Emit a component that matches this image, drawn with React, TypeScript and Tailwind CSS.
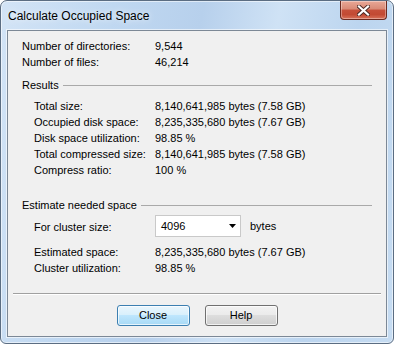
import React from "react";

const Row = ({ label, value, indent = false }: { label: string; value: string; indent?: boolean }) => (
  <div className="flex h-4 items-center leading-4">
    <span className={indent ? "w-[121px] pl-3 box-content" : "w-[133px]"}>{label}</span>
    <span>{value}</span>
  </div>
);

const Header = ({ text }: { text: string }) => (
  <div className="flex h-4 items-center leading-4">
    <span>{text}</span>
    <div className="ml-[4px] mr-[14px] h-px flex-1 bg-[#a9a9a9] mt-[1px]" />
  </div>
);

export default function App() {
  return (
    <div
      className="relative flex h-[344px] w-[394px] flex-col overflow-hidden rounded-t-[7px] rounded-b-[6px] border border-[#5b6d82] bg-[linear-gradient(100deg,#d3e4f6_0%,#c0d8f1_25%,#b7d0ec_45%,#cfe2f5_62%,#bcd5ef_80%,#c6dcf2_100%)] shadow-[inset_0_0_0_1px_rgba(255,255,255,0.55)]"
      style={{ fontFamily: '"Liberation Sans", Arial, sans-serif' }}
    >
      {/* title bar */}
      <div className="flex h-[29px] shrink-0 items-start justify-between">
        <div className="flex h-[29px] items-center pl-[7px] text-[12px] text-black [text-shadow:0_0_6px_rgba(255,255,255,0.9)]">
          Calculate Occupied Space
        </div>
        <div className="mr-[6px] flex h-[19px] w-[47px] items-center justify-center rounded-b-[4px] border border-t-0 border-[#6b2a20] bg-[linear-gradient(180deg,#e9a897_0%,#d98a76_45%,#c6503a_50%,#c24a33_75%,#d8725a_100%)] shadow-[inset_0_0_0_1px_rgba(255,255,255,0.35)]">
          <svg width="13" height="11" viewBox="0 0 13 11">
            <path d="M2 1.5 L11 9.5 M11 1.5 L2 9.5" stroke="#4a2a25" strokeWidth="4" strokeLinecap="square" />
            <path d="M2 1.5 L11 9.5 M11 1.5 L2 9.5" stroke="#ffffff" strokeWidth="2.2" strokeLinecap="square" />
          </svg>
        </div>
      </div>

      {/* client area */}
      <div className="mx-[6px] flex h-[307px] flex-col border border-[#7c8896] bg-[#f0f0f0] text-[11px] text-black shadow-[0_0_0_1px_rgba(255,255,255,0.6)]">
        <div className="flex flex-col pl-[14px] pt-[7px]">
          <Row label="Number of directories:" value="9,544" />
          <Row label="Number of files:" value="46,214" />
          <div className="mt-[7px]">
            <Header text="Results" />
          </div>
          <div className="mt-[5px] flex flex-col">
            <Row indent label="Total size:" value="8,140,641,985 bytes (7.58 GB)" />
            <Row indent label="Occupied disk space:" value="8,235,335,680 bytes (7.67 GB)" />
            <Row indent label="Disk space utilization:" value="98.85 %" />
            <Row indent label="Total compressed size:" value="8,140,641,985 bytes (7.58 GB)" />
            <Row indent label="Compress ratio:" value="100 %" />
          </div>
          <div className="mt-[19px]">
            <Header text="Estimate needed space" />
          </div>
          <div className="mt-[2px] flex h-[22px] items-center">
            <span className="box-content w-[121px] pl-3 pt-[2px]">For cluster size:</span>
            <div className="flex h-[22px] w-[86px] items-center justify-between border border-[#c9c9c9] bg-white pl-[5px] pr-[4px]">
              <span>4096</span>
              <svg width="7" height="4" viewBox="0 0 7 4">
                <path d="M0 0 H7 L3.5 4 Z" fill="#000" />
              </svg>
            </div>
            <span className="ml-[9px]">bytes</span>
          </div>
          <div className="mt-[7px] flex flex-col">
            <Row indent label="Estimated space:" value="8,235,335,680 bytes (7.67 GB)" />
            <Row indent label="Cluster utilization:" value="98.85 %" />
          </div>
        </div>

        <div className="mx-[5px] mt-[17px] h-[2px] border-t border-b border-t-[#a0a0a0] border-b-white" />

        <div className="mt-[10px] flex justify-center gap-[15px]">
          <div className="flex h-[21px] w-[73px] items-center justify-center rounded-[3px] border border-[#3c7fb1] bg-[linear-gradient(180deg,#eaf6fd_0%,#d9f0fc_45%,#bee6fd_50%,#a7d9f5_100%)] shadow-[inset_0_0_0_1px_rgba(255,255,255,0.7)]">
            Close
          </div>
          <div className="flex h-[21px] w-[73px] items-center justify-center rounded-[3px] border border-[#707070] bg-[linear-gradient(180deg,#f2f2f2_0%,#ebebeb_45%,#dddddd_50%,#cfcfcf_100%)] shadow-[inset_0_0_0_1px_rgba(255,255,255,0.7)]">
            Help
          </div>
        </div>
      </div>
    </div>
  );
}
